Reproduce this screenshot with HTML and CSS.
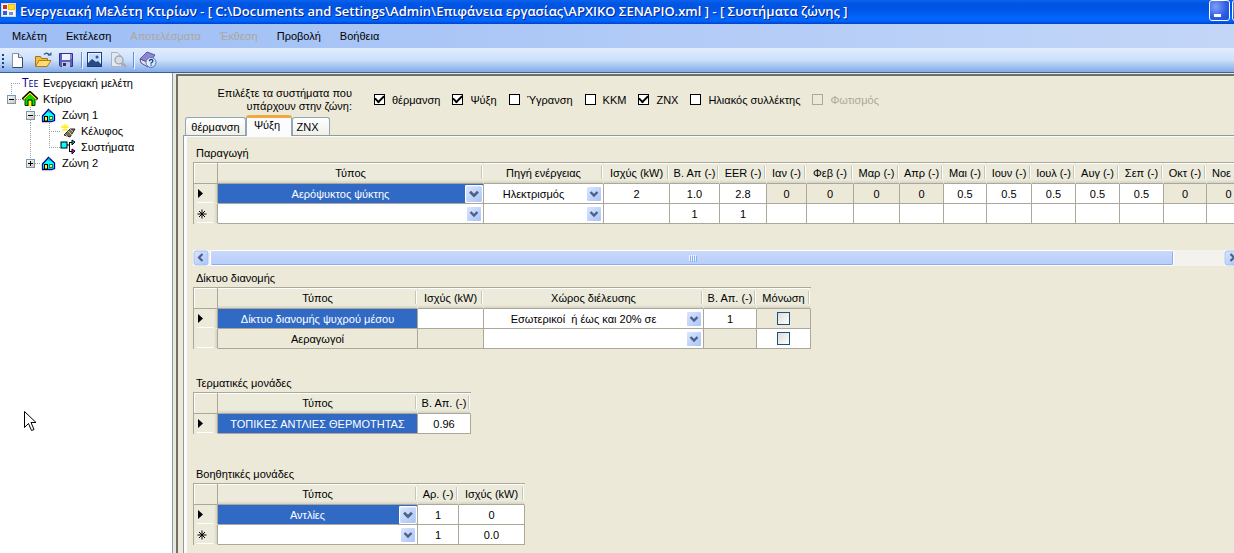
FILE: index.html
```html
<!DOCTYPE html>
<html lang="el">
<head>
<meta charset="utf-8">
<title>Ενεργειακή Μελέτη Κτιρίων</title>
<link rel="stylesheet" href="styles.css">
</head>
<body>
<svg class="defs" aria-hidden="true">
  <defs>
    <linearGradient id="arrow-bg" x1="0" y1="0" x2="1" y2="1"><stop offset="0" stop-color="#dbe5fe"/><stop offset="1" stop-color="#a9c4f8"/></linearGradient>
    <linearGradient id="lens" x1="0" y1="0" x2="1" y2="1"><stop offset="0" stop-color="#fff"/><stop offset="1" stop-color="#b9d3fa"/></linearGradient>
    <linearGradient id="plus-bg" x1="0" y1="0" x2="1" y2="1"><stop offset="0" stop-color="#fff"/><stop offset="1" stop-color="#c9c3b3"/></linearGradient>
    <symbol id="i-arrow" viewBox="0 0 16 16"><rect width="16" height="16" rx="1" fill="#fff"/><rect x="1" y="1" width="14" height="14" rx="1" fill="url(#arrow-bg)"/><path d="M4.5 6 8 9.5 11.5 6" fill="none" stroke="#4d6185" stroke-width="2.4"/></symbol>
    <symbol id="i-left" viewBox="0 0 16 16"><rect width="16" height="16" rx="2" fill="#fff"/><rect x="1" y="1" width="14" height="14" rx="2" fill="url(#arrow-bg)" stroke="#a9c0ee"/><path d="M9.5 4 6 7.5 9.5 11" fill="none" stroke="#4d6185" stroke-width="2.2"/></symbol>
    <symbol id="i-right" viewBox="0 0 16 16"><rect width="16" height="16" rx="2" fill="#fff"/><rect x="1" y="1" width="14" height="14" rx="2" fill="url(#arrow-bg)" stroke="#a9c0ee"/><path d="M6.5 4 10 7.5 6.5 11" fill="none" stroke="#4d6185" stroke-width="2.2"/></symbol>
    <symbol id="i-current" viewBox="0 0 10 10"><path d="M1 0v9l5-4.5z" fill="#000"/></symbol>
    <symbol id="i-new" viewBox="0 0 10 10"><path d="M5 .5v9M.5 5h9M2 2l6 6M8 2 2 8" stroke="#000" stroke-width="1"/></symbol>
    <symbol id="i-minus" viewBox="0 0 9 9"><rect x=".5" y=".5" width="8" height="8" fill="url(#plus-bg)" stroke="#7898b5"/><path d="M2 4.5h5" stroke="#000"/></symbol>
    <symbol id="i-plus" viewBox="0 0 9 9"><rect x=".5" y=".5" width="8" height="8" fill="url(#plus-bg)" stroke="#7898b5"/><path d="M2 4.5h5M4.5 2v5" stroke="#000"/></symbol>
    <symbol id="i-zone" viewBox="0 0 16 16"><path d="M2 8v6h9l3-1V8L8 3z" fill="#0ff"/><path d="M1.500 9 7.500 2.500l6 5.500v5.500l-3 1h-9z" fill="none" stroke="#000090" stroke-width="1.300"/><path d="M8 3v3" stroke="#0a9ab8"/><rect x="3.500" y="9.500" width="3" height="4.500" fill="#ff0" stroke="#000"/><rect x="8.500" y="9.500" width="3" height="3" fill="#ff0" stroke="#008080"/></symbol>
  </defs>
</svg>

<header class="titlebar">
  <svg class="app-icon" width="15" height="14" viewBox="0 0 15 14"><rect x=".5" y=".5" width="14" height="13" fill="#f4f4f4" stroke="#d8d8d8"/><rect x="2" y="2" width="4" height="4" fill="#d92b1c"/><rect x="7" y="1" width="7" height="6" fill="#f5c000"/><rect x="8" y="2" width="5" height="4" fill="#ffdc40"/><rect x="2" y="8" width="4" height="4" fill="#2f62d8"/><rect x="8" y="9" width="4" height="3" fill="#6f8fdc"/></svg>
  <h1 class="title">Ενεργειακή Μελέτη Κτιρίων - [ C:\Documents and Settings\Admin\Επιφάνεια εργασίας\ΑΡΧΙΚΟ ΣΕΝΑΡΙΟ.xml ] - [ Συστήματα ζώνης ]</h1>
  <div class="window-buttons">
    <button class="winbtn" aria-label="Ελαχιστοποίηση"><span class="min-mark"></span></button>
    <button class="winbtn" aria-label="Μεγιστοποίηση"></button>
  </div>
</header>

<nav class="menubar">
  <button>Μελέτη</button><button>Εκτέλεση</button><button disabled>Αποτελέσματα</button><button disabled>Έκθεση</button><button>Προβολή</button><button>Βοήθεια</button>
</nav>

<div class="toolbar">
  <svg class="grip" width="3" height="15" viewBox="0 0 3 15"><path d="M1 1v14" stroke="#1f3f86" stroke-width="2" stroke-dasharray="2 2"/></svg>
  <button aria-label="Νέο"><svg width="18" height="18"><path d="M1.500 2.500h6l4 4v10h-10z" fill="#fff" stroke="#8794a8"/><path d="M7.500 2.500v4h4" fill="#d7e2f3" stroke="#5c6f8c"/><path d="M11.500 6.500v10h-10" fill="none" stroke="#3a485e"/></svg></button>
  <button aria-label="Άνοιγμα"><svg width="18" height="18"><path d="M.5 15V5.500h5l1 2h6V15z" fill="#f2bd45" stroke="#a97310"/><path d="M.5 15.500 4 9.500h12l-4 6z" fill="#ffdc72" stroke="#b27c14"/><path d="M9 3.500q3-3 5.500 1" fill="none" stroke="#3b5f93" stroke-width="1.500"/><path d="M12.500 4.500h4V1z" fill="#3b5f93"/></svg></button>
  <button aria-label="Αποθήκευση"><svg width="18" height="18"><path d="M.5 2.500h13v13h-12l-1-1z" fill="#5b62c0" stroke="#31338f"/><rect x="3" y="3" width="8" height="6" fill="#eef1fd"/><path d="M12 3v5" stroke="#a5abe9"/><rect x="3" y="11" width="8" height="5" fill="#bfc5dc"/><rect x="4" y="12" width="3" height="3" fill="#2c2e75"/></svg></button>
  <span class="sep"></span>
  <button aria-label="Εικόνα"><svg width="18" height="18"><rect x=".5" y="1.500" width="14" height="14" fill="#eef5ff" stroke="#1d3c77"/><rect x="2" y="3" width="11" height="11" fill="#c4daf8"/><path d="M1 15v-3l4-4 4 3 2-1 3 3v2z" fill="#254a86"/><circle cx="10" cy="6" r="1.500" fill="#315b9d"/></svg></button>
  <button aria-label="Προεπισκόπηση" disabled><svg width="18" height="18"><path d="M.5 1.500h6l4 4v10H.5z" fill="#e4e9f0" stroke="#aab2bd"/><circle cx="8" cy="9" r="4" fill="#d6dde6" stroke="#a4abb4" stroke-width="1.500"/><path d="m11 12 4 4" stroke="#a4abb4" stroke-width="2.500"/></svg></button>
  <span class="sep"></span>
  <button aria-label="Βοήθεια"><svg width="18" height="18"><path d="M1 8 8 1l8 3-6 8z" fill="#8d85cd" stroke="#5c5399"/><path d="m1 8 1 4 7 4 1-4z" fill="#e3e3ef" stroke="#5c5399"/><circle cx="12" cy="11.500" r="5" fill="url(#lens)" stroke="#5379b7"/><path d="M10.300 10.200q0-1.700 1.800-1.700t1.800 1.500q0 1-1.800 2v.7M12.100 13.500v1.300" fill="none" stroke="#1e418a" stroke-width="1.300"/></svg></button>
</div>

<div class="workspace">
  <aside class="sidebar">
    <ul class="tree">
      <li><svg class="guide" width="22" height="16"><path d="M11.500 8v8M11 8.500h10" class="dots"/></svg><span class="tee">T<small>EE</small></span><span>Ενεργειακή μελέτη</span></li>
      <li><svg class="guide" width="22" height="16"><path d="M11.500 0v4M16 8.500h5" class="dots"/><use href="#i-minus" x="7" y="4" width="9" height="9"/></svg><svg class="node" width="16" height="16"><path d="M3 8v6.500h10V8L8 3z" fill="#0d0" stroke="#004000"/><path d="M.5 8.500 8 1.500l7.500 7" fill="none" stroke="#000" stroke-width="3"/><path d="M1.500 8.500 8 2.300l6.500 6.200" fill="none" stroke="#ff0" stroke-width="1.300"/><path d="M6 15V9h4v6" fill="#ff0" stroke="#000"/></svg><span>Κτίριο</span></li>
      <li><svg class="guide" width="41" height="16"><path d="M30.500 0v4M30.500 13v3M35 8.500h6" class="dots"/><use href="#i-minus" x="26" y="4" width="9" height="9"/></svg><svg class="node" width="16" height="16"><use href="#i-zone"/></svg><span>Ζώνη 1</span></li>
      <li><svg class="guide" width="60" height="16"><path d="M30.500 0v16M49.500 0v16M49 8.500h11" class="dots"/></svg><svg class="node" width="16" height="16"><path d="m4 12 6-6h5l-5 8z" fill="#77735a" stroke="#222"/><path d="m5 11 3 3M8 8l4 4M10 6l3 3" stroke="#c8c08a"/><path d="M5 1v7M1 4.500h8M2 2l6 6M8 2 2 8" stroke="#ffef20" stroke-width="1.200"/></svg><span>Κέλυφος</span></li>
      <li><svg class="guide" width="60" height="16"><path d="M30.500 0v16M49.500 0v8M49 8.500h11" class="dots"/></svg><svg class="node" width="16" height="16"><rect x="1" y="3" width="6" height="6" fill="#0ff" stroke="#000"/><path d="M7 6h3M9.500 3v9M9 3.500h4M9 12.500h4" stroke="#000" fill="none"/><path d="m12 1 3 2-3 3z" fill="#0bb" stroke="#000"/><path d="m12 10 3 2-3 3z" fill="#f0f" stroke="#000"/></svg><span>Συστήματα</span></li>
      <li><svg class="guide" width="41" height="16"><path d="M30.500 0v4M35 8.500h6" class="dots"/><use href="#i-plus" x="26" y="4" width="9" height="9"/></svg><svg class="node" width="16" height="16"><use href="#i-zone"/></svg><span>Ζώνη 2</span></li>
    </ul>
    <svg class="cursor" width="13" height="21" viewBox="0 0 13 21"><path d="M.5.5v16l4-4 3 7 2.500-1-3-7h5z" fill="#fff" stroke="#000"/></svg>
  </aside>

  <main class="pane">
    <div class="options" role="group" aria-labelledby="options-label">
      <p id="options-label" class="prompt">Επιλέξτε τα συστήματα που<br>υπάρχουν στην ζώνη:</p>
      <label><input class="flat" type="checkbox" checked>θέρμανση</label>
      <label><input class="flat" type="checkbox" checked>Ψύξη</label>
      <label><input class="flat" type="checkbox">Ύγρανση</label>
      <label><input class="flat" type="checkbox">ΚΚΜ</label>
      <label><input class="flat" type="checkbox" checked>ΖΝΧ</label>
      <label><input class="flat" type="checkbox">Ηλιακός συλλέκτης</label>
      <label class="off"><input class="flat" type="checkbox" disabled>Φωτισμός</label>
    </div>

    <div class="tabs" role="tablist">
      <button role="tab" class="tab">θέρμανση</button><button role="tab" class="tab active" aria-selected="true">Ψύξη</button><button role="tab" class="tab last">ΖΝΧ</button>
    </div>

    <div class="tabpanel" role="tabpanel">
      <section class="block production">
        <h2>Παραγωγή</h2>
        <table class="grid wide">
          <colgroup><col class="w24"><col class="w266"><col class="w120"><col class="w66"><col class="w50"><col class="w47"><col class="w40"><col class="w47"><col class="w46"><col class="w44"><col class="w43"><col class="w45"><col class="w44"><col class="w44"><col class="w44"><col class="w43"><col class="w44"></colgroup>
          <thead><tr><th></th><th>Τύπος</th><th>Πηγή ενέργειας</th><th>Ισχύς (kW)</th><th>Β. Απ (-)</th><th>EER (-)</th><th>Ιαν (-)</th><th>Φεβ (-)</th><th>Μαρ (-)</th><th>Απρ (-)</th><th>Μαι (-)</th><th>Ιουν (-)</th><th>Ιουλ (-)</th><th>Αυγ (-)</th><th>Σεπ (-)</th><th>Οκτ (-)</th><th class="lead">Νοε</th></tr></thead>
          <tbody>
            <tr><th><svg width="10" height="10"><use href="#i-current"/></svg></th><td class="sel"><span class="combo"><select aria-label="Τύπος"><option>Αερόψυκτος ψύκτης</option></select><svg width="18" height="18"><use href="#i-arrow"/></svg></span></td><td><span class="combo"><select aria-label="Πηγή ενέργειας"><option>Ηλεκτρισμός</option></select><svg width="16" height="16"><use href="#i-arrow"/></svg></span></td><td>2</td><td>1.0</td><td>2.8</td><td class="ro">0</td><td class="ro">0</td><td class="ro">0</td><td class="ro">0</td><td>0.5</td><td>0.5</td><td>0.5</td><td>0.5</td><td>0.5</td><td class="ro">0</td><td class="ro">0</td></tr>
            <tr><th><svg width="10" height="10"><use href="#i-new"/></svg></th><td><span class="combo"><select aria-label="Τύπος"><option></option></select><svg width="16" height="16"><use href="#i-arrow"/></svg></span></td><td><span class="combo"><select aria-label="Πηγή ενέργειας"><option></option></select><svg width="16" height="16"><use href="#i-arrow"/></svg></span></td><td></td><td>1</td><td>1</td><td></td><td></td><td></td><td></td><td></td><td></td><td></td><td></td><td></td><td></td><td></td></tr>
          </tbody>
        </table>
        <div class="scrollbar">
          <button aria-label="Αριστερά"><svg width="16" height="16"><use href="#i-left"/></svg></button>
          <div class="track"><div class="thumb"><span></span><span></span><span></span><span></span></div></div>
          <button aria-label="Δεξιά"><svg width="16" height="16"><use href="#i-right"/></svg></button>
        </div>
      </section>

      <section class="block network">
        <h2>Δίκτυο διανομής</h2>
        <table class="grid">
          <colgroup><col class="w24"><col class="w200"><col class="w66"><col class="w220"><col class="w53"><col class="w54"></colgroup>
          <thead><tr><th></th><th>Τύπος</th><th>Ισχύς (kW)</th><th>Χώρος διέλευσης</th><th>Β. Απ. (-)</th><th>Μόνωση</th></tr></thead>
          <tbody>
            <tr><th><svg width="10" height="10"><use href="#i-current"/></svg></th><td class="sel">Δίκτυο διανομής ψυχρού μέσου</td><td></td><td><span class="combo"><select aria-label="Χώρος διέλευσης"><option>Εσωτερικοί &nbsp;ή έως και 20% σε</option></select><svg width="16" height="16"><use href="#i-arrow"/></svg></span></td><td>1</td><td class="ro"><input class="xp" type="checkbox" aria-label="Μόνωση"></td></tr>
            <tr><th></th><td class="ro">Αεραγωγοί</td><td class="ro"></td><td><span class="combo"><select aria-label="Χώρος διέλευσης"><option></option></select><svg width="16" height="16"><use href="#i-arrow"/></svg></span></td><td class="ro"></td><td><input class="xp" type="checkbox" aria-label="Μόνωση"></td></tr>
          </tbody>
        </table>
      </section>

      <section class="block terminal">
        <h2>Τερματικές μονάδες</h2>
        <table class="grid">
          <colgroup><col class="w24"><col class="w200"><col class="w53"></colgroup>
          <thead><tr><th></th><th>Τύπος</th><th>Β. Απ. (-)</th></tr></thead>
          <tbody><tr><th><svg width="10" height="10"><use href="#i-current"/></svg></th><td class="sel">ΤΟΠΙΚΕΣ ΑΝΤΛΙΕΣ ΘΕΡΜΟΤΗΤΑΣ</td><td>0.96</td></tr></tbody>
        </table>
      </section>

      <section class="block auxiliary">
        <h2>Βοηθητικές μονάδες</h2>
        <table class="grid">
          <colgroup><col class="w24"><col class="w200"><col class="w41"><col class="w66"></colgroup>
          <thead><tr><th></th><th>Τύπος</th><th>Αρ. (-)</th><th>Ισχύς (kW)</th></tr></thead>
          <tbody>
            <tr><th><svg width="10" height="10"><use href="#i-current"/></svg></th><td class="sel"><span class="combo"><select aria-label="Τύπος"><option>Αντλίες</option></select><svg width="18" height="18"><use href="#i-arrow"/></svg></span></td><td>1</td><td>0</td></tr>
            <tr><th><svg width="10" height="10"><use href="#i-new"/></svg></th><td><span class="combo"><select aria-label="Τύπος"><option></option></select><svg width="16" height="16"><use href="#i-arrow"/></svg></span></td><td>1</td><td>0.0</td></tr>
          </tbody>
        </table>
      </section>
    </div>
  </main>
</div>
</body>
</html>
```
FILE: styles.css
```css
* { box-sizing: border-box; }
body {
  margin: 0;
  height: 100vh;
  display: flex;
  flex-direction: column;
  overflow: hidden;
  background: #ece9d8;
  color: #000;
  font: 11px/14px "Liberation Sans", Arial, sans-serif;
}
button, select { font: inherit; color: inherit; }
svg { display: block; flex: none; }
.defs { position: absolute; width: 0; height: 0; }

.titlebar {
  flex: none;
  display: flex;
  height: 24px;
  padding-left: 1px;
  overflow: hidden;
  background: linear-gradient(#0a63f0 0, #0054e0 4px, #0056e8 10px, #0066ff 18px, #0064fb 21px, #0042c8 24px);
}
.app-icon { margin: 3px 4px 0 0; }
.title {
  flex: 1;
  margin: 0;
  color: #fff;
  font: 600 13px/22px "Open Sans", "Noto Sans", sans-serif;
  text-shadow: 1px 1px 0 #0a1f80;
  white-space: nowrap;
}
.window-buttons { display: flex; gap: 2px; flex: none; margin-right: -19px; }
.winbtn {
  width: 21px;
  height: 21px;
  padding: 0 0 0 4px;
  border: 1px solid #fff;
  border-radius: 3px;
  background: radial-gradient(circle at 30% 30%, #7f9ff5, #2c5be4 60%, #1c4fd8);
}
.min-mark { display: block; width: 7px; height: 3px; margin-top: 9px; background: #fff; }

.menubar {
  flex: none;
  display: flex;
  align-items: center;
  gap: 19px;
  height: 24px;
  padding-left: 12px;
  background: linear-gradient(90deg, #9ebef5, #c3d6f8);
}
.menubar button { padding: 0; border: 0; background: none; }
.menubar button:disabled { color: #aca899; }

.toolbar {
  flex: none;
  display: flex;
  align-items: center;
  gap: 6px;
  height: 25px;
  padding-left: 2px;
  border-bottom: 1px solid #3b619c;
  background: linear-gradient(#e2edfe, #cbe0fb 50%, #84abe6);
}
.toolbar button { padding: 0; border: 0; background: none; }
.sep { width: 1px; height: 16px; margin: 0 -2px; background: #6a8ccb; box-shadow: 1px 1px 0 #f1f6ff; }
.sep { margin: 0 -1px 0 -2px; }

.workspace { flex: 1; display: flex; min-height: 0; }
.sidebar {
  position: relative;
  flex: none;
  width: 173px;
  margin-right: 3px;
  border-right: 1px solid #7f9db9;
  background: #fff;
}
.tree { margin: 0; padding: 2px 0 0; list-style: none; }
.tree li { display: flex; align-items: center; height: 16px; white-space: nowrap; }
.node { margin-right: 5px; }
.dots { fill: none; stroke: #a0a0a0; stroke-dasharray: 1 1; }
.tee { width: 21px; color: #000080; font: 12px/14px "Open Sans", sans-serif; }
.tee small { font-size: 9px; }
.cursor { position: absolute; left: 24px; top: 338px; }

.pane {
  flex: 1;
  min-width: 0;
  display: flex;
  flex-direction: column;
  overflow: hidden;
  margin-top: 1px;
  padding: 8px 0 0 5px;
  border: solid #716f64;
  border-width: 2px 0 0 2px;
}
.options { flex: none; display: flex; gap: 12px; align-items: center; height: 31px; white-space: nowrap; }
.options label { display: flex; align-items: center; gap: 7px; }
.prompt { width: 169px; margin: 0 10px 0 0; line-height: 13px; text-align: right; }
.off { color: #aca899; }
.flat {
  appearance: none;
  width: 11px;
  height: 11px;
  margin: 0;
  display: grid;
  place-items: center;
  border: 1px solid #000;
  background: #fff;
}
.flat:checked::before { content: ""; width: 7px; height: 4px; margin-top: -3px; border: solid #000; border-width: 0 0 2px 2px; transform: rotate(-45deg); }
.flat:disabled { border-color: #aca899; background: #ece9d8; }

.tabs { flex: none; display: flex; align-items: flex-end; height: 20px; padding-left: 2px; }
.tab {
  height: 18px;
  width: 61px;
  padding: 0;
  border: 1px solid #91a7b4;
  border-bottom: 0;
  border-radius: 3px 3px 0 0;
  background: linear-gradient(#fff, #f0f0ea);
}
.tab.active {
  z-index: 1;
  width: 46px;
  height: 21px;
  margin-bottom: -1px;
  padding: 0 4px 4px 0;
  border-top: 3px solid #f5a83a;
  background: #fcfcfe;
}
.tab.last { width: 38px; padding-right: 7px; }
.tabpanel {
  flex: 1;
  min-height: 0;
  padding: 8px 0 0 6px;
  border: solid #919b9c;
  border-width: 1px 0 0 1px;
  box-shadow: inset 3px 1px 0 #fcfcfe;
}
.block { padding-left: 3px; }
.block h2 { height: 18px; margin: 0; padding-left: 3px; font: inherit; line-height: 18px; }
.production { height: 125px; }
.network { height: 105px; }
.terminal { height: 91px; }

.grid {
  table-layout: fixed;
  width: 0;
  border: solid #aca899;
  border-width: 1px 0 0 1px;
  border-collapse: separate;
  border-spacing: 0;
}
.grid th, .grid td {
  height: 20px;
  padding: 0;
  overflow: hidden;
  border: solid #aca899;
  border-width: 0 1px 1px 0;
  font-weight: normal;
  line-height: 18px;
  text-align: center;
  white-space: nowrap;
}
.grid td { background: #fff; }
.grid thead th {
  height: 21px;
  border-right-color: #ece9d8;
  background:
    linear-gradient(#fff, #fff) right 0 top 3px / 1px 13px no-repeat,
    linear-gradient(#c7c5b2, #c7c5b2) right 1px top 3px / 1px 13px no-repeat,
    linear-gradient(#fff, #fff) top / 100% 1px no-repeat,
    linear-gradient(#ebeadb 17px, #d6d2c2 20px);
}
.grid thead th:first-child { border-right-color: #aca899; background: #ece9d8; box-shadow: inset 1px 1px 0 #fff; }
.grid thead th.lead { padding-left: 5px; text-align: left; }
.grid tbody th {
  padding-left: 3px;
  border-bottom-color: #ece9d8;
  background:
    linear-gradient(#fff, #fff) 3px bottom / 16px 1px no-repeat,
    linear-gradient(#c7c5b2, #c7c5b2) 3px 18px / 16px 1px no-repeat,
    linear-gradient(90deg, #ebeadb 20px, #d6d2c2 23px);
}
.grid td.sel { background: #316ac5; color: #fff; }
.grid td.ro { background: #ece9d8; }
.combo { display: grid; align-items: center; height: 19px; }
.combo > * { grid-area: 1 / 1; }
.combo svg { justify-self: end; margin-right: 1px; pointer-events: none; }
.sel .combo svg { margin-right: 0; }
.combo select {
  appearance: none;
  width: 100%;
  height: 19px;
  padding: 0 20px 0 0;
  border: 0;
  background: none;
  text-align: center;
  text-align-last: center;
}
.xp { appearance: none; display: block; width: 13px; height: 13px; margin: 0 auto; border: 1px solid #1c5180; background: linear-gradient(135deg, #dcdcd7, #fff); }

.w24 { width: 24px; } .w40 { width: 40px; } .w41 { width: 41px; } .w43 { width: 43px; }
.w44 { width: 44px; } .w45 { width: 45px; } .w46 { width: 46px; } .w47 { width: 47px; }
.w50 { width: 50px; } .w53 { width: 53px; } .w54 { width: 54px; } .w66 { width: 66px; }
.w120 { width: 120px; } .w200 { width: 200px; } .w220 { width: 220px; } .w266 { width: 266px; }

.scrollbar { display: flex; height: 16px; margin: 26px -6px 0 0; background: #f3f2ec; }
.scrollbar button { padding: 0; border: 0; background: none; }
.track { flex: 1; display: flex; }
.thumb {
  flex: 0 0 95%;
  display: flex;
  align-items: center;
  justify-content: center;
  gap: 1px;
  margin-left: 1px;
  border: 1px solid #fff;
  border-radius: 2px;
  background: linear-gradient(#c9d8fc, #b7cdfb);
  box-shadow: inset -1px -1px 0 #8fade6;
}
.thumb span { width: 1px; height: 6px; background: #eef4fe; box-shadow: 1px 1px 0 #8cb0f8; }
```
